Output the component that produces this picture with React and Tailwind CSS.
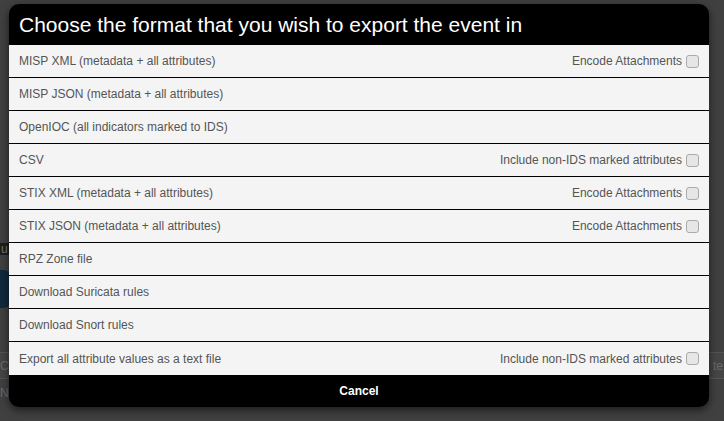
import React from "react";

const rows = [
  ["MISP XML (metadata + all attributes)", "Encode Attachments"],
  ["MISP JSON (metadata + all attributes)", null],
  ["OpenIOC (all indicators marked to IDS)", null],
  ["CSV", "Include non-IDS marked attributes"],
  ["STIX XML (metadata + all attributes)", "Encode Attachments"],
  ["STIX JSON (metadata + all attributes)", "Encode Attachments"],
  ["RPZ Zone file", null],
  ["Download Suricata rules", null],
  ["Download Snort rules", null],
  ["Export all attribute values as a text file", "Include non-IDS marked attributes"],
];

function Row({ label, opt, last }) {
  return (
    <div
      className={`h-[33px] flex items-center justify-between px-[10px] bg-[#f4f4f4] text-[#555] text-[12px] ${last ? "" : "border-b border-black"}`}
    >
      <span>{label}</span>
      {opt && (
        <span className="flex items-center gap-[4px]">
          <span>{opt}</span>
          <span className="w-[13px] h-[13px] rounded-[3px] border border-[#aaa] bg-[#e6e6e6]" />
        </span>
      )}
    </div>
  );
}

export default function App() {
  return (
    <div
      className="relative w-[724px] h-[421px] overflow-hidden bg-[#404040]"
      style={{ fontFamily: '"Liberation Sans", Arial, sans-serif' }}
    >
      {/* dimmed page behind the overlay */}
      <div className="flex flex-col text-[12px] text-[#6a6a6a]">
        <div className="h-[243px]" />
        <div className="w-[30px] h-[12px] bg-[#1e1e1e] leading-[12px] text-[#777] pl-[1px]">u</div>
        <div className="mt-[15px] -ml-[20px] w-[30px] h-[38px] rounded-[6px] bg-[#0f2a3d]" />
        <div className="mt-[44px] h-[27px] border-y border-[#555] bg-[#454545] flex items-center justify-between pr-[1px]">
          <span>Ca</span>
          <span>te</span>
        </div>
        <div className="h-[27px] flex items-center">Ne</div>
      </div>

      {/* modal overlay */}
      <div className="absolute inset-0 pl-[9px] pt-[4px]">
        <div className="w-[700px] rounded-[10px] overflow-hidden bg-black shadow-[0_3px_8px_rgba(0,0,0,0.6)]">
          <div className="h-[41px] flex items-center px-[10px] text-white text-[21px] leading-none">
            Choose the format that you wish to export the event in
          </div>
          {rows.map(([label, opt], i) => (
            <Row key={i} label={label} opt={opt} last={i === rows.length - 1} />
          ))}
          <div className="h-[32px] flex items-center justify-center text-white text-[12px] font-bold">
            Cancel
          </div>
        </div>
      </div>
    </div>
  );
}
